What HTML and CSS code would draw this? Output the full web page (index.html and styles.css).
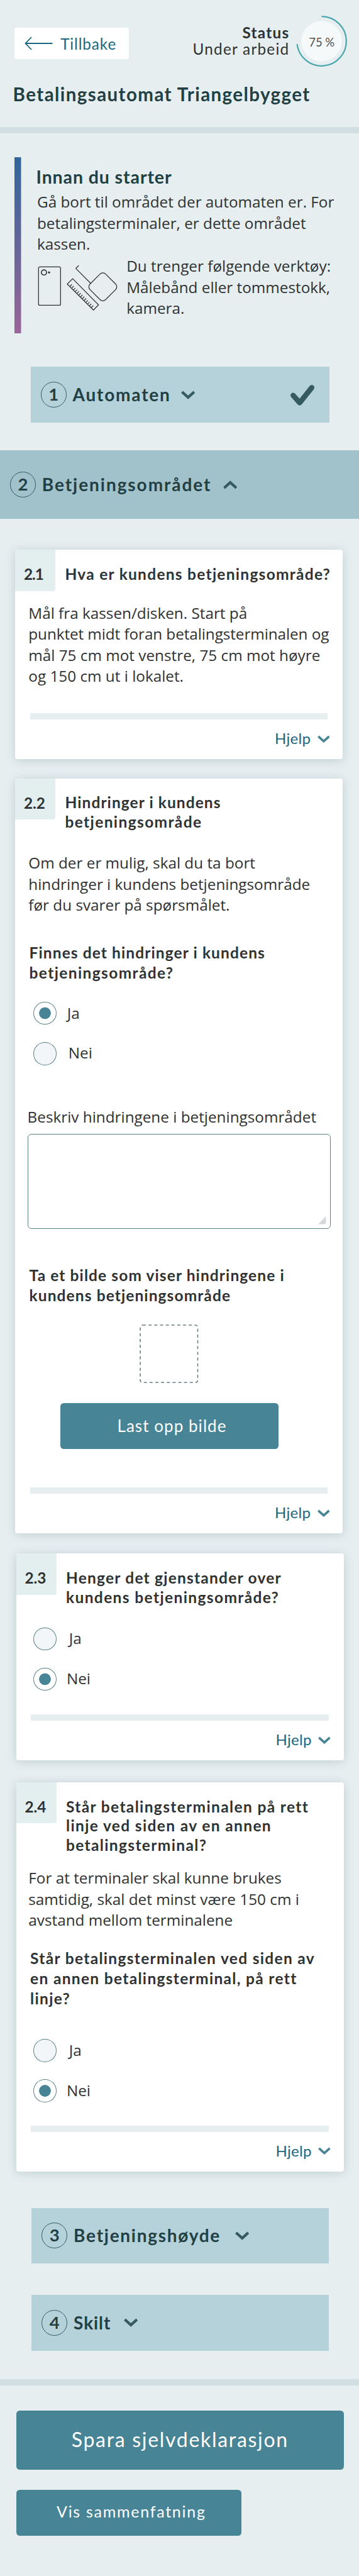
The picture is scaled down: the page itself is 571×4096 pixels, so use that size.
FILE: index.html
```
<!DOCTYPE html>
<html lang="no">
<head>
<meta charset="utf-8">
<title>Betalingsautomat Triangelbygget</title>
<link rel="stylesheet" href="styles.css">
</head>
<body>
<svg class="defs" width="0" height="0">
  <symbol id="chevron" viewBox="0 0 22.4 14"><path d="M1.5 2.2 11.2 10.800 20.9 2.2" fill="none" stroke="currentColor" stroke-width="4.3"/></symbol>
</svg>

<header class="header">
  <div class="topbar">
    <a class="back">
      <svg class="back-arrow" viewBox="0 0 45 22"><path d="M44.5 11H1.5M11 1 1.5 11 11 21" fill="none" stroke="currentColor" stroke-width="1.8"/></svg>
      <span>Tillbake</span>
    </a>
    <div class="status"><strong>Status</strong><span>Under arbeid</span></div>
    <div class="progress">
      <svg viewBox="0 0 81 81">
        <ellipse cx="40.5" cy="40.5" rx="32.3" ry="32" fill="#f5f9fa"/>
        <path d="M40.5 1.2A39.3 39.3 0 1 1 1.5 45.2" fill="none" stroke="#4ba6ad" stroke-width="2.2"/>
      </svg>
      <span class="progress-label">75 %</span>
    </div>
  </div>
  <h1 class="page-title">Betalingsautomat Triangelbygget</h1>
</header>

<section class="intro">
  <h2 class="intro-title">Innan du starter</h2>
  <p class="text">Gå bort til området der automaten er. For<br>betalingsterminaler, er dette området<br>kassen.</p>
  <div class="tools">
    <svg class="tools-icon" viewBox="50 90 510 300" fill="none" stroke="#2f3233" stroke-width="5">
      <rect x="63" y="111" width="138" height="241" rx="8"/>
      <circle cx="97" cy="146" r="16" stroke-width="6.5"/>
      <circle cx="129" cy="146" r="6.5" fill="#2f3233" stroke="none"/>
      <path d="M277 185 439 349 407 382 243 219Z"/>
      <path d="M261 233 272 221M272 244 283 232M283 255 293 244M293 266 305 254M305 277 316 265M316 288 327 276M327 299 338 287M338 310 350 298M350 321 361 309M361 332 372 321M372 343 383 332M383 355 394 343M394 366 406 354"/>
      <path d="M315 103 297 121 391 215"/>
      <rect x="397" y="167" width="138" height="138" rx="24" transform="rotate(45 466 236)"/>
    </svg>
    <p class="text">Du trenger følgende verktøy:<br>Målebånd eller tommestokk,<br>kamera.</p>
  </div>
</section>

<div class="step step-1">
  <span class="step-no">1</span><span class="step-name">Automaten</span>
  <svg class="chevron"><use href="#chevron"/></svg>
  <svg class="check" viewBox="0 0 38 33"><path d="M4.3 16.7 14.7 28.400 33.8 4.300" fill="none" stroke="currentColor" stroke-width="8.4" stroke-linecap="round" stroke-linejoin="round"/></svg>
</div>

<div class="step step-2">
  <span class="step-no">2</span><span class="step-name">Betjeningsområdet</span>
  <svg class="chevron up"><use href="#chevron"/></svg>
</div>

<main class="cards">
  <article class="card card-1">
    <div class="card-head"><span class="badge">2.1</span><h3 class="card-title">Hva er kundens betjeningsområde?</h3></div>
    <p class="text">Mål fra kassen/disken. Start på<br><span class="tight">punktet midt foran betalingsterminalen og</span><br>mål 75 cm mot venstre, 75 cm mot høyre<br>og 150 cm ut i lokalet.</p>
    <div class="card-foot"><a class="help">Hjelp <svg class="help-chevron"><use href="#chevron"/></svg></a></div>
  </article>

  <article class="card card-2">
    <div class="card-head"><span class="badge">2.2</span><h3 class="card-title">Hindringer i kundens<br><span class="wide">betjeningsområde</span></h3></div>
    <p class="text">Om der er mulig, skal du ta bort<br>hindringer i kundens betjeningsområde<br>før du svarer på spørsmålet.</p>
    <h4 class="question">Finnes det hindringer i kundens<br><span class="wide">betjeningsområde?</span></h4>
    <div class="options">
      <label class="option"><i class="radio on"></i><span>Ja</span></label>
      <label class="option"><i class="radio"></i><span>Nei</span></label>
    </div>
    <p class="text field-label">Beskriv hindringene i betjeningsområdet</p>
    <div class="textarea"><svg class="grip" viewBox="0 0 12 12"><path d="M12 0V9.500Q12 12 9.500 12H0Z" fill="#d4d8da"/></svg></div>
    <h4 class="question photo-question">Ta et bilde som viser hindringene i<br>kundens betjeningsområde</h4>
    <svg class="photo" viewBox="0 0 94 94"><rect x="1" y="1" width="92" height="92" rx="4" fill="none" stroke="#6b7f83" stroke-width="1.6" stroke-dasharray="5 4.200"/></svg>
    <a class="button upload">Last opp bilde</a>
    <div class="card-foot"><a class="help">Hjelp <svg class="help-chevron"><use href="#chevron"/></svg></a></div>
  </article>

  <article class="card card-3">
    <div class="card-head"><span class="badge">2.3</span><h3 class="card-title">Henger det gjenstander over<br><span class="wide">kundens betjeningsområde?</span></h3></div>
    <div class="options">
      <label class="option"><i class="radio"></i><span>Ja</span></label>
      <label class="option"><i class="radio on"></i><span>Nei</span></label>
    </div>
    <div class="card-foot"><a class="help">Hjelp <svg class="help-chevron"><use href="#chevron"/></svg></a></div>
  </article>

  <article class="card card-4">
    <div class="card-head"><span class="badge">2.4</span><h3 class="card-title">Står betalingsterminalen på rett<br>linje ved siden av en annen<br>betalingsterminal?</h3></div>
    <p class="text">For at terminaler skal kunne brukes<br>samtidig, skal det minst være 150 cm i<br>avstand mellom terminalene</p>
    <h4 class="question">Står betalingsterminalen ved siden av<br>en annen betalingsterminal, på rett<br>linje?</h4>
    <div class="options">
      <label class="option"><i class="radio"></i><span>Ja</span></label>
      <label class="option"><i class="radio on"></i><span>Nei</span></label>
    </div>
    <div class="card-foot"><a class="help">Hjelp <svg class="help-chevron"><use href="#chevron"/></svg></a></div>
  </article>
</main>

<div class="step step-3">
  <span class="step-no">3</span><span class="step-name">Betjeningshøyde</span>
  <svg class="chevron"><use href="#chevron"/></svg>
</div>
<div class="step step-4">
  <span class="step-no">4</span><span class="step-name">Skilt</span>
  <svg class="chevron"><use href="#chevron"/></svg>
</div>

<footer class="actions">
  <a class="button save">Spara sjelvdeklarasjon</a>
  <a class="button summary">Vis sammenfatning</a>
</footer>
</body>
</html>
```
FILE: styles.css
```
* { box-sizing: border-box; margin: 0; padding: 0; }

body {
  width: 571px;
  height: 4096px;
  overflow: hidden;
  background: #e6eef0;
  color: #2f3233;
  font-family: Lato, "Open Sans", sans-serif;
  font-size: 24.3px;
  white-space: nowrap;
}

svg { display: block; flex: none; }
.defs { position: absolute; }

.text { font-family: "Open Sans", sans-serif; line-height: 33.6px; }
.tight { letter-spacing: -0.08px; }

/* Header */
.header { height: 211.8px; padding: 24.6px 18.8px 0 23px; border-bottom: 10.8px solid #d1dfe3; }
.topbar { display: flex; align-items: flex-start; height: 79.8px; }
.back {
  display: flex; align-items: center;
  width: 182.4px; height: 50px; margin-top: 19.6px; padding-left: 16.2px;
  border-radius: 4px; background: #fff; color: #19687f;
  letter-spacing: 0.9px;
}
.back-arrow { width: 45px; height: 22px; margin-right: 12px; }
.status {
  display: flex; flex-direction: column; align-items: flex-end;
  width: 255px; margin-top: 14.4px;
  line-height: 25.8px; letter-spacing: 1.25px;
}
.progress { position: relative; width: 81px; height: 81px; margin-left: 10.8px; }
.progress-label {
  position: absolute; inset: 0;
  line-height: 85px; text-align: center; font-size: 18.5px; letter-spacing: 0; color: #4c4f50;
}
.page-title { margin: 27.8px 0 0 -2.4px; font-size: 29.5px; line-height: 36px; letter-spacing: 1.42px; color: #214044; }

/* Introduction */
.intro {
  height: 280.1px; margin: 38.1px 0 0 23px; padding: 12.9px 0 0 36px;
  background: linear-gradient(#30669a, #9b6598) 0 0 / 10.5px 100% no-repeat;
}
.intro-title { margin: 0 0 5.5px -1.5px; font-size: 28.5px; line-height: 36px; letter-spacing: 0.9px; color: #214044; }
.tools { display: flex; align-items: flex-start; margin-top: 1.2px; }
.tools-icon { width: 129.4px; height: 76.1px; margin: 12.600px 13.4px 0 -0.6px; }

/* Steps */
.step {
  display: flex; align-items: center;
  height: 88.3px; margin: 0 48.5px 0 50.3px; padding-left: 16px;
  background: #b5d1d9; color: #214044;
  font-size: 28px; font-weight: 700;
}
.step-no {
  width: 40.8px; height: 40.8px; margin-right: 10px;
  border: 1.4px solid #355b60; border-radius: 50%;
  line-height: 37px; text-align: center; font-size: 27.5px;
}
.step-name { line-height: 36px; margin-top: -1.5px; }
.step-1 { margin: 53.4px 47.3px 0 48.8px; }
.step-1 .step-name { letter-spacing: 1.8px; margin-right: 16.2px; }
.step-2 { height: 109.7px; margin: 44.1px 0 0; background: #a1c1cb; }
.step-2 .step-name { letter-spacing: 1.95px; margin-right: 19px; }
.step-3 { margin-top: 57.9px; }
.step-3 .step-name { letter-spacing: 1.74px; margin-right: 23.2px; }
.step-4 { margin-top: 50.5px; }
.step-4 .step-name { letter-spacing: 0.9px; margin-right: 20.5px; }
.chevron { width: 22.4px; height: 14px; color: #355b60; }
.up { transform: rotate(180deg); }
.check { width: 38px; height: 33px; margin: 2px 24.2px 0 auto; color: #355b60; }

/* Question cards */
.cards { margin-top: 49px; }
.card {
  width: 520.8px; margin-left: 25.9px;
  border-radius: 4px; background: #fff;
  box-shadow: 0 2px 16px rgba(70, 105, 110, 0.23);
}
.card > .text { padding-left: 19.4px; }
.card-head { display: flex; align-items: flex-start; }
.badge {
  width: 64.1px; height: 65.3px; padding: 23.8px 0 0 13.6px;
  border-bottom-right-radius: 4px; background: #e3eeef;
  line-height: 30.6px; font-weight: 700;
}
.card-title { margin-bottom: -1px; padding: 23.6px 0 0 15px; font-size: 24.5px; line-height: 30.6px; letter-spacing: 1.07px; }
.wide { letter-spacing: 1.38px; }
.question { padding-left: 22.2px; font-size: 24.5px; line-height: 31.85px; letter-spacing: 1.1px; }
.card-foot { margin-left: 23.6px; width: 473.5px; height: 73.1px; border-top: 10.8px solid #e6eef0; }
.help {
  display: flex; align-items: center; justify-content: flex-end; gap: 10.5px;
  margin-right: -3px; padding-top: 15px;
  font-size: 24px; line-height: 30px; letter-spacing: 0.3px; color: #19687f;
}
.help-chevron { width: 19.8px; height: 12.4px; margin-top: 2px; color: #478495; }

.options { display: flex; flex-direction: column; gap: 27.5px; padding-left: 27.3px; }
.option { display: flex; align-items: center; height: 36.6px; font-family: "Open Sans", sans-serif; line-height: 34px; }
.option span { margin-top: -1.6px; }
.option:first-child span { padding-left: 19.8px; }
.option:last-child span { padding-left: 15.9px; }
.radio { width: 36.8px; height: 36.6px; border: 1.4px solid #5d8386; border-radius: 50%; background: #f2f6f8; }
.radio.on { background: radial-gradient(circle, #478495 8.900px, #fff 9.700px); }

.card-1, .card-2 { margin-left: 24.4px; }
.card-1 > .text, .card-2 > .text { padding-left: 20.9px; }
.card-1 .card-title { letter-spacing: 1.27px; }
.card-1 .badge { letter-spacing: -1px; }
.card-1 > .text { margin-top: 17.9px; }
.card-1 .card-foot { margin-top: 42.3px; }

.card-2 { margin-top: 30.3px; }
.card-2 > .text { margin-top: 33.6px; line-height: 33.5px; }
.card-2 .question { margin-top: 43.2px; }
.card-2 .options { margin-top: 30.4px; padding-left: 28.8px; }
.card-2 .option:first-child span { padding-left: 16.8px; margin-top: 0; }
.card-2 .option:last-child span { padding-left: 18.8px; margin-top: -3px; }
.card-2 > .field-label { margin-top: 65.3px; padding-left: 19.2px; }
.textarea {
  display: flex; align-items: flex-end; justify-content: flex-end;
  width: 481.6px; height: 150.9px; margin: 10.6px 0 0 19.6px; padding: 6px;
  border: 1.6px solid #5d8386; border-radius: 6px;
}
.grip { width: 12.4px; height: 12.4px; }
.card-2 .photo-question { margin-top: 58.6px; }
.photo { width: 93.6px; height: 93.4px; margin: 29.700px 0 0 197.6px; }
.card-2 .card-foot { margin-top: 61.2px; height: 72.8px; }

.card-3 { margin-top: 32.3px; }
.card-3 .card-title { letter-spacing: 1.22px; }
.card-3 .options { margin-top: 33.6px; }
.card-3 .card-foot { margin-top: 37.7px; }

.card-4 { margin-top: 34.9px; }
.card-4 .card-title { letter-spacing: 1.36px; }
.card-4 > .text { margin-top: 20.8px; }
.card-4 .question { margin-top: 28.1px; letter-spacing: 1.32px; }
.card-4 .options { margin-top: 48.7px; }
.card-4 .card-foot { margin-top: 36.5px; }

/* Buttons */
.button { display: block; border-radius: 5.5px; background: #478495; color: #fff; text-align: center; }
.upload { width: 347.4px; height: 73.1px; margin: 31.8px 0 0 71.4px; padding-left: 8px; font-size: 26px; line-height: 72px; letter-spacing: 1.05px; }
.actions { margin-top: 45.7px; padding: 39.8px 24.3px 0 25.9px; border-top: 10.7px solid #d1dfe3; }
.save { height: 94.1px; font-size: 32px; line-height: 91px; letter-spacing: 1.7px; }
.summary { width: 357.9px; height: 73.1px; margin-top: 32.2px; padding-left: 8px; font-size: 25px; line-height: 69.500px; letter-spacing: 1.73px; }
```
